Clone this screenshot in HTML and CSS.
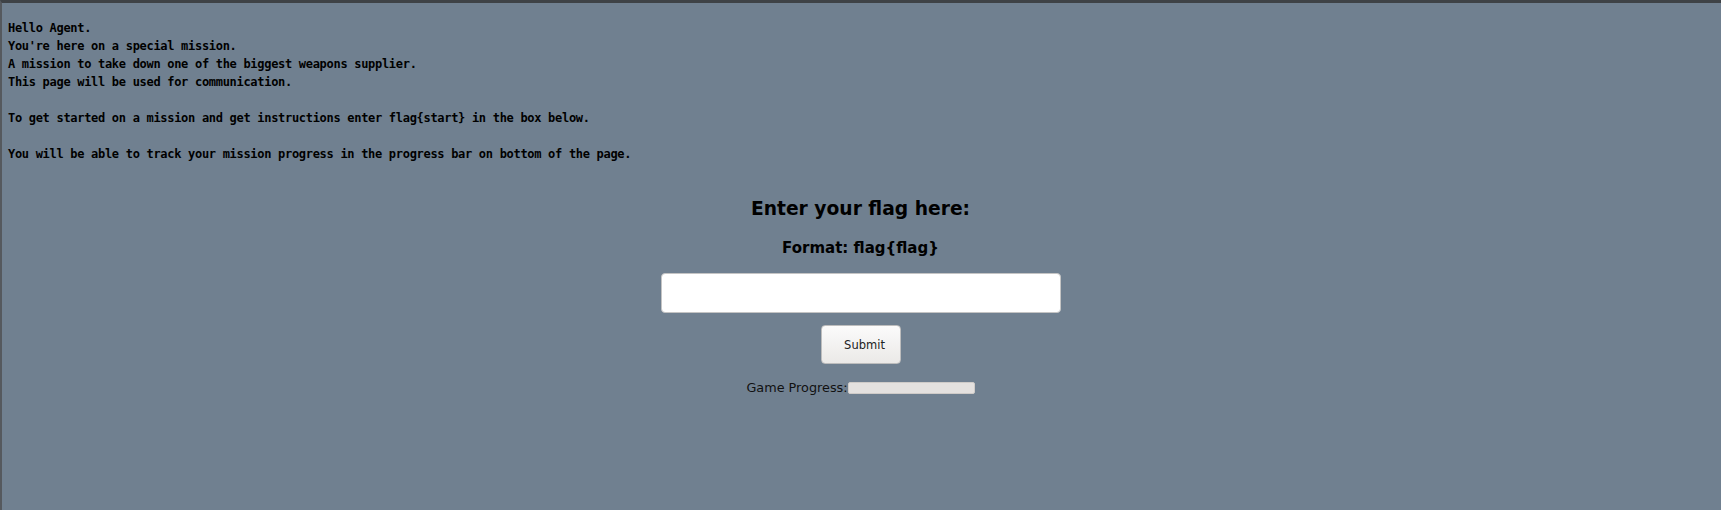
FILE: index.html
```html
<!DOCTYPE html>
<html>
<head>
<meta charset="utf-8">
<title>Mission</title>
<link rel="stylesheet" href="styles.css">
</head>
<body>
<div class="frame">
  <div class="intro">
    <div>Hello Agent.</div>
    <div>You're here on a special mission.</div>
    <div>A mission to take down one of the biggest weapons supplier.</div>
    <div>This page will be used for communication.</div>
    <div class="blank"></div>
    <div>To get started on a mission and get instructions enter flag{start} in the box below.</div>
    <div class="blank"></div>
    <div>You will be able to track your mission progress in the progress bar on bottom of the page.</div>
  </div>
  <div class="form">
    <h3 class="title">Enter your flag here:</h3>
    <h4 class="format">Format: flag{flag}</h4>
    <input class="flag-input" type="text">
    <button class="submit">Submit</button>
    <div class="progress-row">
      <span class="progress-label">Game Progress:</span>
      <span class="progress-bar"></span>
    </div>
  </div>
</div>
</body>
</html>
```

FILE: styles.css
```css
html, body {
  margin: 0;
  padding: 0;
  height: 100%;
}
body {
  background: #708090;
  font-family: "DejaVu Sans", sans-serif;
  color: #000;
}
.frame {
  min-height: 100%;
  box-sizing: border-box;
  border-top: 3px solid #3e4246;
  border-left: 2px solid #55595e;
  padding: 16px 8px 0 6px;
}
.intro {
  font-family: "DejaVu Sans Mono", monospace;
  font-weight: bold;
  font-size: 12px;
  letter-spacing: -0.3px;
  line-height: 18px;
  white-space: nowrap;
}
.blank {
  height: 18px;
}
.form {
  display: flex;
  flex-direction: column;
  align-items: center;
  padding-top: 34px;
}
.title {
  margin: 0;
  font-size: 18.7px;
  line-height: 24px;
  font-weight: bold;
}
.format {
  margin: 18px 0 0;
  font-size: 15px;
  line-height: 19px;
  font-weight: bold;
}
.flag-input {
  margin-top: 15px;
  width: 400px;
  height: 40px;
  box-sizing: border-box;
  border: 1px solid #c4c4c4;
  border-radius: 4px;
  background: #fff;
  outline: none;
}
.submit {
  margin-top: 12px;
  width: 80px;
  height: 39px;
  box-sizing: border-box;
  border: 1px solid #bdbdbd;
  border-radius: 4px;
  background: linear-gradient(#fbfbfb, #ebe9e7);
  font-family: "DejaVu Sans", sans-serif;
  font-size: 11.5px;
  color: #222;
  padding: 0 0 0 8px;
}
.progress-row {
  margin-top: 16px;
  display: flex;
  align-items: center;
  height: 16px;
}
.progress-label {
  font-size: 12.8px;
  line-height: 16px;
  color: #111;
}
.progress-bar {
  display: inline-block;
  width: 127px;
  height: 12px;
  box-sizing: border-box;
  background: #e4e1df;
  border: 1px solid #cfcbc8;
  border-radius: 2px;
}
```
